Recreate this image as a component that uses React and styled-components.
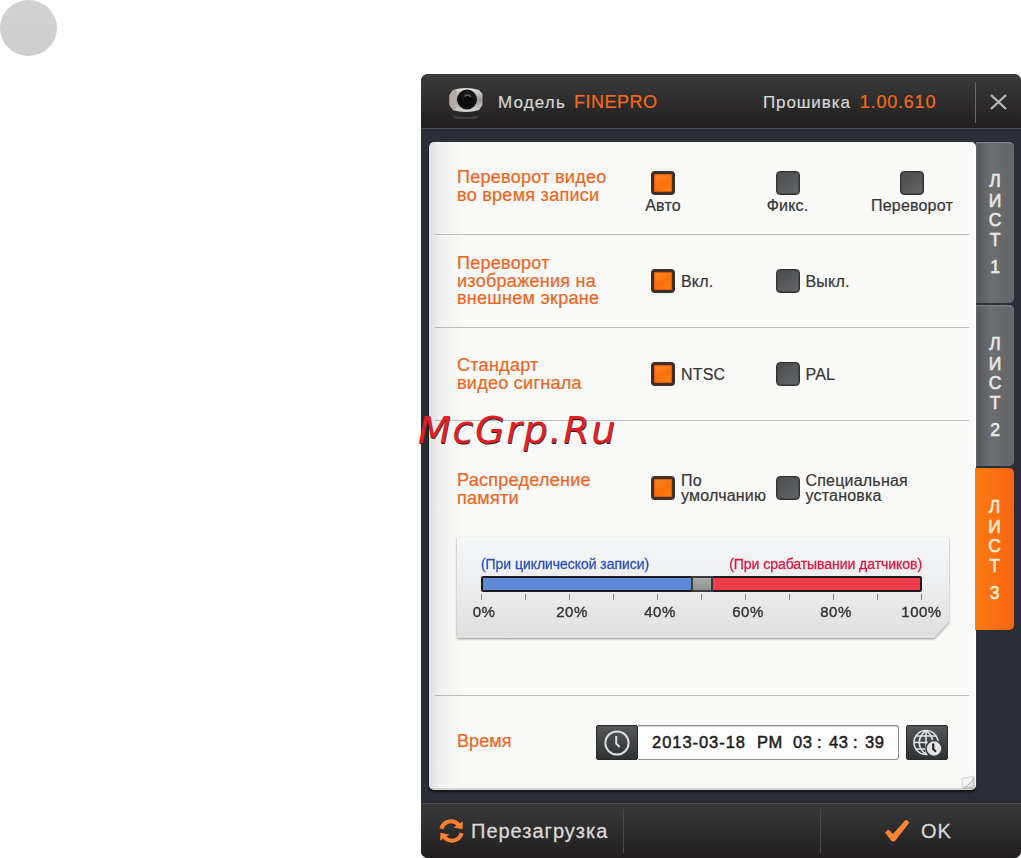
import React, { useState } from "react";
import styled, { createGlobalStyle } from "styled-components";

const GlobalStyle = createGlobalStyle`
  * {
    box-sizing: border-box;
  }

  body {
    margin: 0;
    background: #fff;
    font-family: "Liberation Sans", Arial, sans-serif;
    overflow: hidden;
  }

  button {
    font-family: inherit;
    border: none;
    padding: 0;
    cursor: pointer;
  }
`;

const Page = styled.main`
  position: relative;
  display: grid;
  grid-template-columns: 421px 600px;
  align-items: start;
  height: 858px;
`;

const PageDot = styled.div`
  width: 57px;
  height: 56px;
  border-radius: 50%;
  background: linear-gradient(#d2d2d2, #cdcdcd);
`;

const Window = styled.section`
  display: flex;
  flex-direction: column;
  height: 784px;
  margin-top: 74px;
  border-radius: 7px;
  background: #2b2e35;
  overflow: hidden;
`;

const Text = styled.span`
  color: ${({ $color }) => $color || "inherit"};
  font-size: ${({ $size }) => $size}px;
  letter-spacing: ${({ $spacing }) => $spacing || 0}px;
  white-space: nowrap;
`;

const Header = styled.header`
  display: flex;
  align-items: center;
  height: 55px;
  padding: 2px 0 0 27px;
  color: #d6d6d6;
  background: linear-gradient(#3c3b3b, #302f2f 45%, #211f1f);
  border-bottom: 1px solid #4a4b4e;
`;

const Model = styled.div`
  display: flex;
  align-items: baseline;
  gap: 8px;
  width: 265px;
  margin-left: 13px;
  -webkit-text-stroke: 0.2px currentColor;
`;

const Firmware = styled(Model)`
  gap: 9px;
  width: 212px;
  margin-left: 0;
`;

const CloseButton = styled.button`
  display: flex;
  align-items: center;
  width: 45px;
  height: 41px;
  padding-left: 14px;
  background: none;
  border-left: 1px solid #68686a;
`;

const Body = styled.div`
  display: flex;
  flex: 1;
  padding: 13px 0 0 8px;
`;

const Card = styled.div`
  position: relative;
  width: 547px;
  height: 648px;
  border-radius: 5px;
  background: linear-gradient(90deg, #dddcde, #f1f1f1 2%, #f9f9f8 6%, #f9f9f8);
  border-right: 2px solid #fff;
  border-bottom: 2px solid #d5d5d5;
  box-shadow: 0 2px 3px #101114, 1px 0 1px #515359;
`;

const Row = styled.div`
  display: grid;
  grid-template-columns: 194px 1fr;
  height: ${({ $height }) => $height}px;
  margin: 0 5px 0 6px;
  padding-left: 22px;
  border-bottom: ${({ $last }) => ($last ? "none" : "1px solid #bdbabb")};
`;

const Label = styled.h3`
  display: flex;
  flex-direction: column;
  margin: 0;
  padding-top: ${({ $top }) => $top}px;
  color: #ee6420;
  font-weight: 400;
  line-height: 17.5px;
  -webkit-text-stroke: 0.2px currentColor;
`;

const Options = styled.div`
  display: grid;
  grid-template-columns: repeat(3, 124.5px);
  align-items: start;
  padding-top: ${({ $top }) => $top}px;
`;

const Option = styled.button`
  display: flex;
  flex-direction: ${({ $stacked }) => ($stacked ? "column" : "row")};
  align-items: center;
  gap: ${({ $stacked }) => ($stacked ? 1 : 6)}px;
  width: 24px;
  background: none;
  color: #353535;
  text-align: left;
`;

const OptionText = styled.span`
  display: flex;
  flex-direction: column;
  line-height: ${({ $multi }) => ($multi ? 15 : 19)}px;
  -webkit-text-stroke: 0.2px currentColor;
`;

const CheckBox = styled.span`
  flex: none;
  width: 24px;
  height: 24px;
  border-radius: 4px;
  border: ${({ $on }) => ($on ? "3px solid #402f28" : "1px solid #303133")};
  background: ${({ $on }) =>
    $on
      ? "linear-gradient(150deg, #f98a2a, #fb6f08 55%, #ff8412)"
      : "linear-gradient(145deg, #4b4c4e, #5a5b5d 60%, #656668)"};
  box-shadow: ${({ $on }) => ($on ? "inset 0 0 1px 1px #d85a10" : "inset 0 0 0 1px #48494b")};
`;

const MemoryPanel = styled.div`
  filter: drop-shadow(0 1px 1px #8f8f8f);
  margin: 21px 20px 0 28px;
`;

const MemoryShape = styled.div`
  width: 492px;
  height: 101px;
  padding: 19px 0 0 24px;
  background: linear-gradient(#f5f6f7, #eaeaeb 60%, #dfdfdf);
  clip-path: polygon(0 0, 100% 0, 100% 84%, 97% 100%, 0 100%);
`;

const Captions = styled.div`
  display: flex;
  justify-content: space-between;
  width: 441px;
  height: 20px;
  line-height: 17px;
  -webkit-text-stroke: 0.3px currentColor;
`;

const Track = styled.div`
  display: flex;
  width: 441px;
  height: 16px;
  border: 2px solid #1f1a20;
  border-radius: 2px;
`;

const Share = styled.div`
  background: ${({ $color }) => $color};
`;

const Handle = styled.div`
  width: 22px;
  height: 16px;
  margin-top: -2px;
  border: 2px solid #3c3a3c;
  background: linear-gradient(#aaa, #929292);
`;

const Scale = styled.div`
  display: flex;
  justify-content: space-between;
  width: 441px;
  padding-top: 2px;
`;

const Tick = styled.div`
  display: flex;
  flex-direction: column;
  align-items: center;
  width: 1px;
  color: #343434;
  line-height: 17px;
  -webkit-text-stroke: 0.4px currentColor;

  &::before {
    content: "";
    flex: none;
    width: 1px;
    height: 6px;
    margin-bottom: 3px;
    background: #888;
  }

  &:not(:last-child) span {
    margin-left: 5px;
  }
`;

const TimeControls = styled.div`
  display: flex;
  height: 35px;
  margin: 29px 0 0 -55px;
`;

const IconButton = styled.button`
  display: flex;
  align-items: center;
  justify-content: center;
  width: 42px;
  height: 35px;
  border: 1px solid #29292a;
  border-radius: 2px;
  background: linear-gradient(#555657, #303132);
`;

const DateField = styled.div`
  display: flex;
  align-items: center;
  width: 261px;
  margin-right: 7px;
  padding-left: 14px;
  color: #1d1d1d;
  background: #fff;
  border: 1px solid #8e8e8e;
  border-left: none;
  border-radius: 0 3px 3px 0;
  box-shadow: inset 0 1px 1px #c9c9c9;
  -webkit-text-stroke: 0.5px currentColor;
`;

const DatePart = styled.span`
  width: ${({ $width }) => $width}px;
  font-size: 16.5px;
  letter-spacing: ${({ $spacing }) => $spacing}px;
  white-space: nowrap;
`;

const PageCurl = styled.svg`
  position: absolute;
  right: -1px;
  bottom: -1px;
`;

const Tabs = styled.nav`
  display: flex;
  flex-direction: column;
  gap: 2px;
  margin-left: -1px;
`;

const Tab = styled.button`
  position: relative;
  display: flex;
  flex-direction: column;
  align-items: center;
  width: ${({ $active }) => ($active ? 39 : 38)}px;
  height: ${({ $active }) => ($active ? 162 : 161)}px;
  margin-left: ${({ $active }) => ($active ? 0 : 1)}px;
  padding-top: 30px;
  border-radius: 0 5px 5px 0;
  color: ${({ $active }) => ($active ? "#ffeccf" : "#e8e8e8")};
  background: ${({ $active }) =>
    $active ? "linear-gradient(90deg, #fa7a12, #fb6412)" : "linear-gradient(90deg, #55575a, #6c6e70 40%, #626467)"};
  box-shadow: ${({ $active }) => ($active ? "none" : "inset 0 1px 2px #85878a")};
  font-size: 17.5px;
  line-height: 19.5px;
  -webkit-text-stroke: 0.6px currentColor;

  span:last-child {
    margin-top: 8px;
  }
`;

const Footer = styled.footer`
  display: grid;
  grid-template-columns: 202px 197px 201px;
  height: 55px;
  padding: 5px 0;
  color: #d8d8d8;
  background: linear-gradient(#3b3a3a, #2d2c2c 50%, #211f1f);
  border-top: 1px solid #4b4c50;
  -webkit-text-stroke: 0.3px currentColor;
`;

const FooterButton = styled.button`
  display: flex;
  align-items: center;
  padding-left: ${({ $left }) => $left}px;
  gap: ${({ $gap }) => $gap}px;
  color: inherit;
  background: none;

  & + & {
    border-left: 1px solid #4b4b4c;
  }
`;

const Watermark = styled.div`
  position: absolute;
  left: 418px;
  top: 406px;
  color: #e01f26;
  font: italic 38px/48px "DejaVu Sans", sans-serif;
  letter-spacing: 1.7px;
  text-shadow: 0.5px 0.5px 0 #241b1b;
`;

const CameraIcon = () => (
  <svg width="37" height="35" viewBox="0 -1 37 35">
    <defs>
      <linearGradient id="shell" x2="0" y2="1">
        <stop stopColor="#e4e4e2" />
        <stop offset="0.5" stopColor="#9c9a97" />
        <stop offset="1" stopColor="#d8d8d8" />
      </linearGradient>
      <radialGradient id="lens" cx="0.55" cy="0.35">
        <stop stopColor="#5b5d60" />
        <stop offset="0.35" stopColor="#232325" />
        <stop offset="1" stopColor="#080809" />
      </radialGradient>
    </defs>
    <path d="M5 4 Q18 0 31 4 L34.5 8 V19 L31 24 Q18 28 5 24 L1.5 19 V9Z" fill="url(#shell)" />
    <path d="M1.5 9 L5 4 H9 L7 25 L5 24 L1.5 19Z" fill="#b4aaa4" />
    <circle cx="19" cy="13.5" r="10" fill="#151516" />
    <circle cx="19" cy="13.5" r="8" fill="url(#lens)" />
    <circle cx="20" cy="13" r="4" fill="#08080a" />
    <path d="M16.5 10.5 Q20 7.5 23 11" fill="none" stroke="#6b6d70" strokeWidth="1.2" />
    <path d="M4 29 Q18 33 32 29 L28 33 H8Z" fill="#555" opacity="0.5" />
  </svg>
);

const CloseIcon = () => (
  <svg width="17" height="16" viewBox="0 0 17 16" fill="none" stroke="#b9b9b9" strokeWidth="2.3">
    <path d="M1 1 L16 15 M16 1 L1 15" />
  </svg>
);

const ClockIcon = () => (
  <svg width="26" height="26" viewBox="0 0 26 26" fill="none" stroke="#dedede">
    <circle cx="13" cy="13" r="11.6" strokeWidth="2" />
    <path d="M12.2 6 V13.5 L15.5 17" strokeWidth="1.9" />
  </svg>
);

const GlobeClockIcon = () => (
  <svg width="30" height="28" viewBox="0 0 30 28" fill="none" stroke="#e2e2e2" strokeWidth="1.6">
    <circle cx="14" cy="13.5" r="12" />
    <path d="M14 1.5 V26 M2 13.5 H26 M4 7 H24 M4 20 H22" />
    <path d="M14 1.5 C5 8 5 19 14 25.5 M14 1.5 C23 8 23 19 14 25.5" />
    <circle cx="22" cy="19.5" r="8" fill="#e5e5e5" stroke="#3c3d3e" strokeWidth="1.6" />
    <path d="M21.2 14.5 V20 L24 22.8" stroke="#292929" strokeWidth="2.2" />
  </svg>
);

// two half circles, each ending in an arrow head
const ReloadIcon = () => (
  <svg width="25" height="24" viewBox="0 0 25 24">
    <g fill="none" stroke="#f8802e" strokeWidth="4">
      <path d="M2.3 9.8 C5 1.5 14.5 0 19.8 6" />
      <path d="M22.7 14.2 C20 22.5 10.5 24 5.2 18" />
    </g>
    <path d="M23.8 2.5 L23.6 10.2 L14.5 8.6Z M1.2 21.5 L1.4 13.8 L10.5 15.4Z" fill="#f8802e" />
  </svg>
);

const CheckIcon = () => (
  <svg width="26" height="24" viewBox="0 0 26 24">
    <path d="M1.5 13.5 L4.5 11 L9 15.5 L22 1 L25 3.5 L10.5 22 H8Z" fill="#fb8432" stroke="#fb8432" strokeLinejoin="round" />
  </svg>
);

const settings = [
  {
    id: "record",
    height: 93,
    labelTop: 27,
    optionTop: 29,
    stacked: true,
    label: ["Переворот видео", "во время записи"],
    options: [["Авто"], ["Фикс."], ["Переворот"]],
  },
  {
    id: "screen",
    height: 93,
    labelTop: 20,
    optionTop: 34,
    label: ["Переворот", "изображения на", "внешнем экране"],
    options: [["Вкл."], ["Выкл."]],
  },
  {
    id: "signal",
    height: 93,
    labelTop: 29,
    optionTop: 34,
    label: ["Стандарт", "видео сигнала"],
    options: [["NTSC"], ["PAL"]],
  },
  {
    id: "memory",
    height: 95,
    labelTop: 51,
    optionTop: 52,
    label: ["Распределение", "памяти"],
    options: [
      ["По", "умолчанию"],
      ["Специальная", "установка"],
    ],
    last: true,
  },
];

const dateParts = [
  { text: "2013-03-18", width: 105, spacing: 0.95 },
  { text: "PM", width: 36, spacing: 0.5 },
  { text: "03", width: 24, spacing: 0.5 },
  { text: ":", width: 12, spacing: 0 },
  { text: "43", width: 24, spacing: 0.5 },
  { text: ":", width: 12, spacing: 0 },
  { text: "39", width: 24, spacing: 0.5 },
];

const ticks = ["0%", "", "20%", "", "40%", "", "60%", "", "80%", "", "100%"];

function SettingRow({ setting }) {
  const [selected, setSelected] = useState(0);

  return (
    <Row $height={setting.height} $last={setting.last}>
      <Label $top={setting.labelTop}>
        {setting.label.map((line) => (
          <Text key={line} $size={18} $spacing={0.28}>
            {line}
          </Text>
        ))}
      </Label>
      <Options $top={setting.optionTop}>
        {setting.options.map((lines, index) => (
          <Option key={lines[0]} $stacked={setting.stacked} onClick={() => setSelected(index)}>
            <CheckBox $on={selected === index} />
            <OptionText $multi={lines.length > 1}>
              {lines.map((line) => (
                <Text key={line} $size={16} $spacing={0.2}>
                  {line}
                </Text>
              ))}
            </OptionText>
          </Option>
        ))}
      </Options>
    </Row>
  );
}

function MemorySlider() {
  return (
    <MemoryPanel>
      <MemoryShape>
        <Captions>
          <Text $size={14} $spacing={-0.05} $color="#2f50bd">
            (При циклической записи)
          </Text>
          <Text $size={14} $spacing={-0.05} $color="#dc1a43">
            (При срабатывании датчиков)
          </Text>
        </Captions>
        <Track>
          <Share $color="#5f8ad8" style={{ width: 208 }} />
          <Handle />
          <Share $color="#ee3d4d" style={{ flex: 1 }} />
        </Track>
        <Scale>
          {ticks.map((tick, index) => (
            <Tick key={index}>
              <Text $size={15} $spacing={0.5}>
                {tick}
              </Text>
            </Tick>
          ))}
        </Scale>
      </MemoryShape>
    </MemoryPanel>
  );
}

function App() {
  const [activeTab, setActiveTab] = useState(3);

  return (
    <>
      <GlobalStyle />
      <Page>
        <PageDot />
        <Window>
          <Header>
            <CameraIcon />
            <Model>
              <Text $size={17} $spacing={1.15}>
                Модель
              </Text>
              <Text $size={18} $spacing={0.5} $color="#f26a1b">
                FINEPRO
              </Text>
            </Model>
            <Firmware>
              <Text $size={17} $spacing={0.9}>
                Прошивка
              </Text>
              <Text $size={18} $spacing={0.8} $color="#f26a1b">
                1.00.610
              </Text>
            </Firmware>
            <CloseButton aria-label="Закрыть">
              <CloseIcon />
            </CloseButton>
          </Header>
          <Body>
            <Card>
              {settings.map((setting) => (
                <SettingRow key={setting.id} setting={setting} />
              ))}
              <MemorySlider />
              <Row $height={58} />
              <Row $height={92} $last>
                <Label $top={37}>
                  <Text $size={18} $spacing={0.1}>
                    Время
                  </Text>
                </Label>
                <TimeControls>
                  <IconButton>
                    <ClockIcon />
                  </IconButton>
                  <DateField>
                    {dateParts.map((part, index) => (
                      <DatePart key={index} $width={part.width} $spacing={part.spacing}>
                        {part.text}
                      </DatePart>
                    ))}
                  </DateField>
                  <IconButton>
                    <GlobeClockIcon />
                  </IconButton>
                </TimeControls>
              </Row>
              <PageCurl width="14" height="14" viewBox="0 0 14 14">
                <path d="M1 13 Q2 9 1 3 Q7 3 13 1" fill="#f4f4f4" stroke="#cfcfcf" />
                <path d="M2 13 Q9 10 13 2 V13Z" fill="#dedede" stroke="#b0b0b0" />
              </PageCurl>
            </Card>
            <Tabs>
              {[1, 2, 3].map((tab) => (
                <Tab key={tab} $active={activeTab === tab} onClick={() => setActiveTab(tab)}>
                  <span>Л</span>
                  <span>И</span>
                  <span>С</span>
                  <span>Т</span>
                  <span>{tab}</span>
                </Tab>
              ))}
            </Tabs>
          </Body>
          <Footer>
            <FooterButton $left={18} $gap={7}>
              <ReloadIcon />
              <Text $size={20} $spacing={1}>
                Перезагрузка
              </Text>
            </FooterButton>
            <FooterButton />
            <FooterButton $left={63} $gap={11}>
              <CheckIcon />
              <Text $size={20} $spacing={1}>
                OK
              </Text>
            </FooterButton>
          </Footer>
        </Window>
        <Watermark>McGrp.Ru</Watermark>
      </Page>
    </>
  );
}

export default App;
